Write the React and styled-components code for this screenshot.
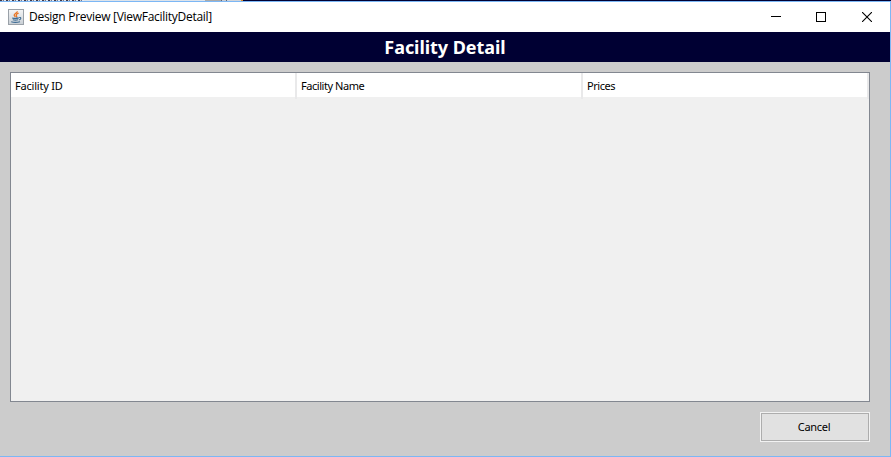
import React from 'react';
import styled, { createGlobalStyle } from 'styled-components';

const GlobalStyle = createGlobalStyle`
  * { box-sizing: border-box; }
  body { margin: 0; overflow: hidden; background: #cccccc; }
`;

const Screen = styled.div`
  width: 891px;
  height: 457px;
  display: flex;
  flex-direction: column;
  font-family: 'Noto Sans', 'Open Sans', sans-serif;
  color: #000;
`;

const DesktopStrip = styled.div`
  height: 1px;
  flex: none;
  background:
    repeating-linear-gradient(90deg, #40394a 0 2px, #d8cfc4 2px 3px, #6b7896 3px 4px, #e6eaf0 4px 6px) 0 0 / 84px 1px no-repeat,
    linear-gradient(90deg, #dde3ea 0 205px, #aaaaaa 205px 221px, #606878 221px 222px, #c8ccd2 222px 226px, #606878 226px 227px, #d0d4da 227px 241px, #d89030 241px 243px, #000033 243px);
`;

const Window = styled.main`
  flex: 1;
  display: flex;
  flex-direction: column;
  border: solid #7cb7f5;
  border-width: 1px 1px 1px 0;
  background: #cccccc;
`;

const TitleBar = styled.header`
  height: 30px;
  flex: none;
  display: flex;
  align-items: center;
  padding-left: 8px;
  background: #fff;
`;

const WindowTitle = styled.span`
  flex: 1;
  margin-left: 5px;
  font-family: 'Open Sans', sans-serif;
  font-size: 12px;
  line-height: 16px;
  letter-spacing: -0.28px;
  white-space: nowrap;
`;

const WindowButton = styled.button`
  width: ${(p) => p.$width}px;
  height: 30px;
  padding: 0;
  border: 0;
  background: transparent;
  display: flex;
  align-items: center;
  justify-content: center;
`;

const Banner = styled.h1`
  height: 30px;
  flex: none;
  margin: 0;
  background: #000033;
  color: #fff;
  font-size: 18px;
  font-weight: 700;
  line-height: 31px;
  letter-spacing: -0.05px;
  text-align: center;
`;

const Content = styled.section`
  flex: 1;
  display: flex;
  flex-direction: column;
  align-items: flex-end;
  gap: 10px;
  padding: 10px 20px 0 10px;
`;

const TablePane = styled.div`
  width: 860px;
  height: 330px;
  border: 1px solid #828790;
  background: #f0f0f0;
`;

const HeaderRow = styled.div`
  height: 24px;
  display: grid;
  grid-template-columns: 286px 286px 286px;
  background: #fff;
`;

const HeaderCell = styled.div`
  padding-left: 4px;
  border-right: 2px solid #e9e9ea;
  font-size: 11px;
  line-height: 26px;
  letter-spacing: ${(p) => p.$spacing}px;
`;

const CancelButton = styled.button`
  width: 110px;
  height: 30px;
  padding: 0 2px 0 0;
  border: 1px solid #f2f2f2;
  background: #e1e1e1;
  box-shadow: inset 0 0 0 1px #adadad;
  font-family: inherit;
  font-size: 11px;
  line-height: 28px;
  letter-spacing: -0.3px;
  color: #000;
`;

const JavaIcon = () => (
  <svg width="16" height="16" viewBox="0 0 16 16" fill="none">
    <defs>
      <linearGradient id="tile" x1="0" y1="0" x2="0" y2="1">
        <stop offset="0" stopColor="#f4f5f6" />
        <stop offset="1" stopColor="#c9cfd5" />
      </linearGradient>
    </defs>
    <rect x=".5" y=".5" width="15" height="15" fill="url(#tile)" stroke="#9aa1a8" />
    <path d="M9.2 2.2C9.8 4 5.6 4.5 6.2 6.3c.2.7.9 1 1.2 1.6M10.6 4.2C8.6 5 7.6 5.8 8.5 6.8c.5.6.2 1-.3 1.4" stroke="#e87524" strokeWidth="1.3" />
    <path d="M4.2 8.9c1.7.6 4.8.5 6.6 0M4.8 10.7c1.6.5 3.8.5 5.4 0M3.2 12.8c2.5.7 6.3.6 8.8-.1M11.2 8.6c2-.5 2.4 1.3-.2 2.4" stroke="#3f6c94" strokeWidth="1.1" />
  </svg>
);

const columns = [
  { label: 'Facility ID', spacing: -0.2 },
  { label: 'Facility Name', spacing: -0.45 },
  { label: 'Prices', spacing: -0.45 },
];

export default function App() {
  return (
    <>
      <GlobalStyle />
      <Screen>
        <DesktopStrip />
        <Window>
          <TitleBar>
            <JavaIcon />
            <WindowTitle>Design Preview [ViewFacilityDetail]</WindowTitle>
            <WindowButton $width={45} aria-label="Minimize">
              <svg width="10" height="10" shapeRendering="crispEdges"><path d="M0 4h10v1H0z" /></svg>
            </WindowButton>
            <WindowButton $width={46} aria-label="Maximize">
              <svg width="10" height="10" shapeRendering="crispEdges"><path d="M.5.5h9v9h-9z" fill="none" stroke="#000" /></svg>
            </WindowButton>
            <WindowButton $width={46} aria-label="Close">
              <svg width="10" height="10"><path d="M0 0l10 10M10 0L0 10" stroke="#000" strokeWidth="1.1" /></svg>
            </WindowButton>
          </TitleBar>
          <Banner>Facility Detail</Banner>
          <Content>
            <TablePane>
              <HeaderRow>
                {columns.map((c) => (
                  <HeaderCell key={c.label} $spacing={c.spacing}>{c.label}</HeaderCell>
                ))}
              </HeaderRow>
            </TablePane>
            <CancelButton>Cancel</CancelButton>
          </Content>
        </Window>
      </Screen>
    </>
  );
}
